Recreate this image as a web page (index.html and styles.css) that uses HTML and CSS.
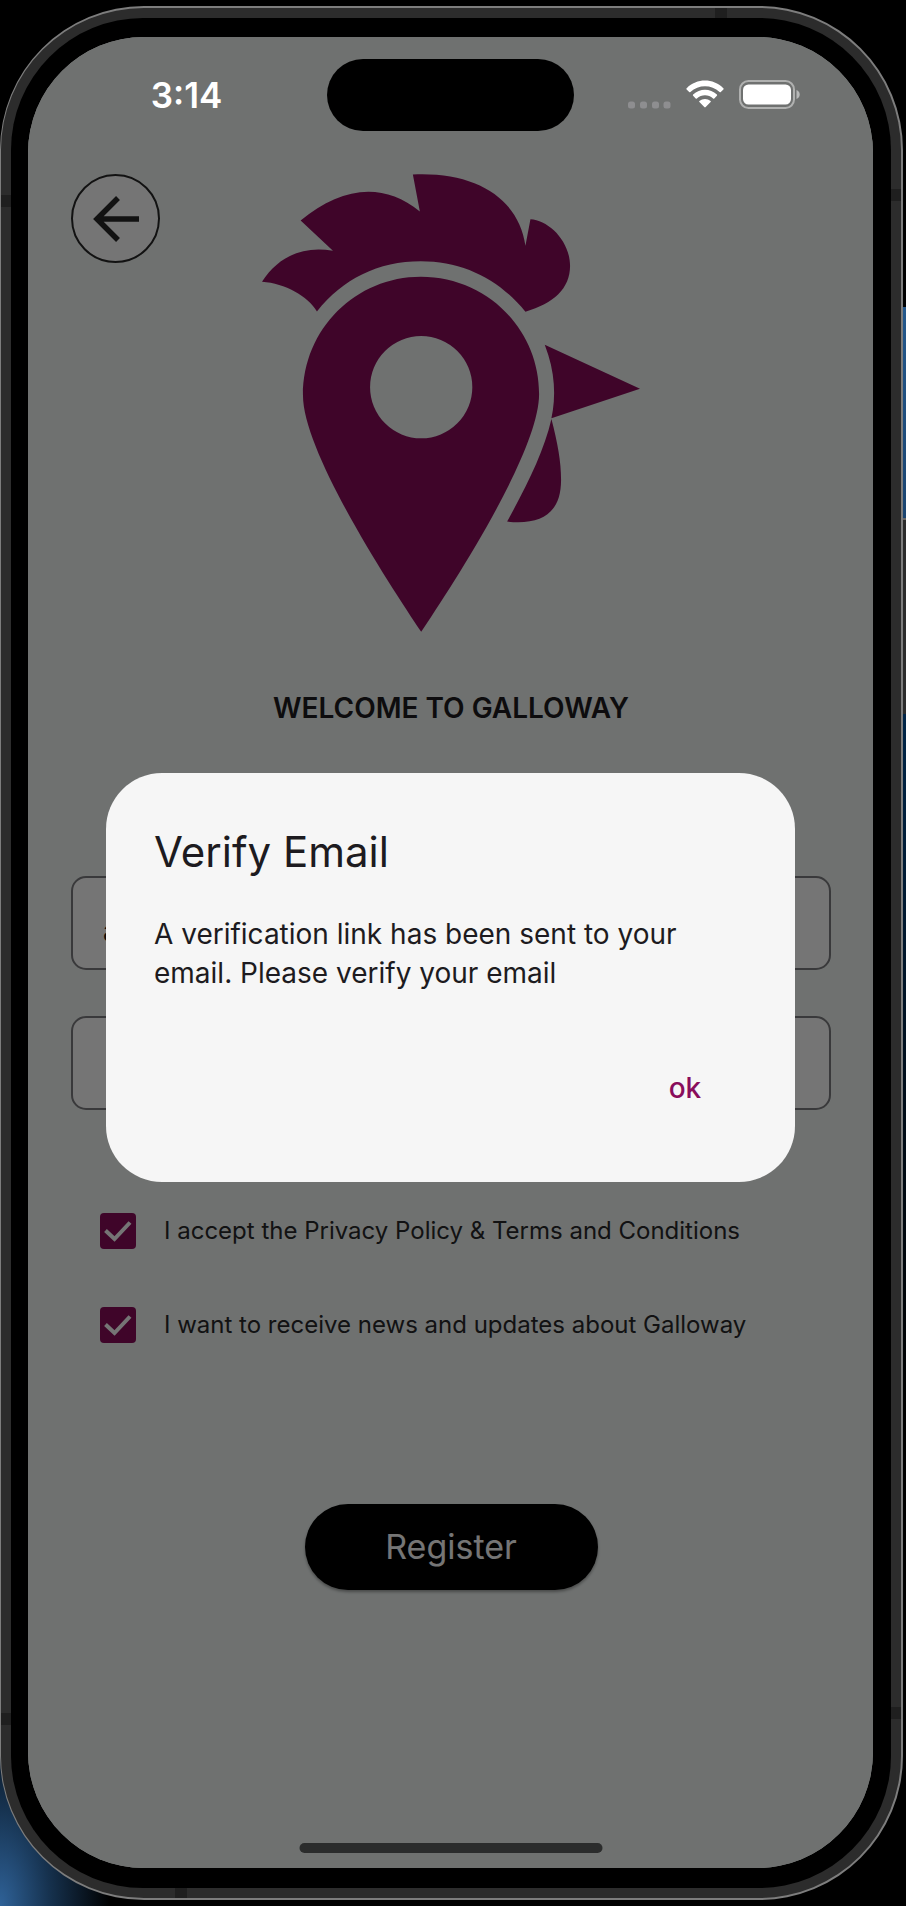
FILE: index.html
```html
<!DOCTYPE html>
<html lang="en">
<head>
<meta charset="utf-8">
<meta name="viewport" content="width=device-width, initial-scale=1">
<title>Galloway – Register</title>
<link rel="stylesheet" href="styles.css">
</head>
<body>
<div class="window-edge" aria-hidden="true"></div>
<div class="phone">
  <span class="antenna antenna-top"></span>
  <span class="antenna antenna-bottom"></span>
  <span class="antenna antenna-left"></span>
  <span class="antenna antenna-left-low"></span>
  <span class="antenna antenna-right"></span>
  <span class="antenna antenna-right-low"></span>
  <div class="bezel">
    <div class="screen">
      <header class="status-bar">
        <time class="clock">3:14</time>
        <div class="island"></div>
        <div class="indicators">
          <svg class="signal" width="43" height="8" viewBox="0 0 43 8" aria-hidden="true">
            <rect x="0" y="0.5" width="7" height="7" rx="2.5"/><rect x="12" y="0.5" width="7" height="7" rx="2.5"/><rect x="24" y="0.5" width="7" height="7" rx="2.5"/><rect x="35.5" y="0.5" width="7" height="7" rx="2.5"/>
          </svg>
          <svg width="38" height="28" viewBox="0 0 38 28" fill="#fff" aria-hidden="true">
            <path d="M0.7 8.2C10.8-2 27.2-2 37.3 8.2c.5.5.5.8.1 1.2l-2.600 2.600c-.4.4-.8.4-1.200 0C25.500 4.200 12.500 4.200 4.400 12c-.4.4-.8.4-1.200 0L.6 9.400c-.4-.4-.4-.7.1-1.200z"/>
            <path d="M7.100 14.600c6.700-6.400 17.100-6.400 23.800 0 .4.4.4.8 0 1.200l-2.600 2.600c-.4.4-.8.4-1.200 0-4.700-4.200-11.500-4.200-16.200 0-.4.4-.8.4-1.200 0l-2.600-2.600c-.4-.4-.4-.8 0-1.200z"/>
            <path d="M13.400 21c3.200-2.800 8-2.800 11.200 0 .4.4.4.7 0 1.100l-4.900 4.900c-.5.5-.9.5-1.400 0l-4.900-4.900c-.4-.4-.4-.7 0-1.100z"/>
          </svg>
          <svg width="61" height="29" viewBox="0 0 61 29" aria-hidden="true">
            <rect x="1" y="1" width="54" height="27" rx="8.500" fill="none" stroke="#fff" stroke-opacity=".45" stroke-width="2"/>
            <rect x="4" y="4.500" width="48" height="20" rx="5.500" fill="#fff"/>
            <path d="M57.500 10c2 .6 3.200 2.300 3.200 4.500s-1.200 3.900-3.200 4.500z" fill="#fff" fill-opacity=".5"/>
          </svg>
        </div>
      </header>

      <main class="page">
        <div class="hero">
          <button class="back" type="button" aria-label="Back">
            <svg width="46" height="46" viewBox="0 0 46 46" fill="none" stroke="#292929" stroke-width="5.500" aria-hidden="true">
              <path d="M25 2L4 23l21 21M4 23H46"/>
            </svg>
          </button>
          <svg class="logo" viewBox="64 42 1135 1374" role="img" aria-label="Galloway logo">
            <path d="M64 365C112 291 183 256 277 272L180 181C300 82 425 62 538 154L517 43C708 34 835 116 855 257L870 177C925 180 989 242 989 318C989 385 940 431 855 455C777 358 669 303 541 303C413 303 306 356 229 454C201 408 134 370 64 365Z"/>
            <path fill-rule="evenodd" d="M542 1416C456 1288 187 880 187 706C187 506 346 350 541 350C738 350 896 506 896 702C896 880 628 1288 542 1416ZM542 528A153.500 153.500 0 1 0 542 835A153.500 153.500 0 1 0 542 528Z"/>
            <path d="M913 554L1199 686L933 775C947 712 945 636 913 554Z"/>
            <path d="M933 777C952 850 962 905 962 960C962 1057 907 1096 800 1085C858 979 910 877 933 777Z"/>
          </svg>
        </div>
        <h1 class="welcome">WELCOME TO GALLOWAY</h1>
        <form class="form">
          <input class="field" type="text" aria-label="Email" value="a">
          <input class="field" type="password" aria-label="Password">
          <div class="consents">
            <label class="consent"><input type="checkbox" checked><span>I accept the Privacy Policy &amp; Terms and Conditions</span></label>
            <label class="consent"><input type="checkbox" checked><span>I want to receive news and updates about Galloway</span></label>
          </div>
          <button class="register" type="button">Register</button>
        </form>
      </main>

      <div class="backdrop">
        <section class="dialog" role="dialog" aria-modal="true" aria-labelledby="dialog-title">
          <h2 id="dialog-title">Verify Email</h2>
          <p>A verification link has been sent to your email. Please verify your email</p>
          <div class="actions"><button class="ok" type="button">ok</button></div>
        </section>
      </div>
      <div class="home-indicator"></div>
    </div>
  </div>
</div>
</body>
</html>
```
FILE: styles.css
```css
* {
  box-sizing: border-box;
}

body {
  position: relative;
  min-height: 100vh;
  margin: 0;
  padding: 6px 3px 6px 0;
  background: radial-gradient(ellipse 110px 220px at 0 100%, #2f6298, #16324f 45%, #000 100%) #000;
  font-family: Inter, "Liberation Sans", sans-serif;
}

.window-edge {
  position: absolute;
  top: 307px;
  right: 0;
  bottom: 0;
  width: 3px;
  background: linear-gradient(#24588c, #1a4470 211px, #666 211px, #666 213px, #2b2b2b 213px, #2b2b2b 407px, #002548 407px, #000c18 800px, #000 1100px);
}

.phone {
  position: relative;
  min-height: calc(100vh - 12px);
  padding: 10px;
  border: 2px solid #7d7d7d;
  border-left-width: 1px;
  border-radius: 144px;
  background: #2c2c2c;
  display: flex;
}

.bezel {
  flex: 1;
  display: flex;
  padding: 19px 18px 20px 17px;
  border-radius: 132px;
  background: #000;
}

.screen {
  position: relative;
  flex: 1;
  min-width: 0;
  overflow: hidden;
  border-radius: 116px;
  background: #f1f6f4;
}

.antenna {
  position: absolute;
  width: 10px;
  height: 12px;
  background: #1f1f1f;
}

.antenna-top, .antenna-bottom { width: 12px; height: 10px; }
.antenna-top { top: 0; right: 174px; }
.antenna-bottom { bottom: 0; left: 174px; }
.antenna-left { top: 187px; left: 0; }
.antenna-left-low { bottom: 173px; left: 0; }
.antenna-right { top: 181px; right: 0; }
.antenna-right-low { bottom: 179px; right: 0; }

.status-bar {
  position: relative;
  z-index: 2;
  display: grid;
  grid-template-columns: 1fr auto 1fr;
  align-items: center;
  height: 94px;
  padding-top: 22px;
  color: #fff;
}

.clock {
  justify-self: center;
  padding-left: 18px;
  font-size: 35px;
  font-weight: 600;
  line-height: 40px;
}

.island {
  width: 247px;
  height: 72px;
  border-radius: 36px;
  background: #000;
}

.indicators {
  display: flex;
  align-items: center;
  justify-content: center;
  gap: 15px;
  padding: 0 20px 2px 0;
}

.signal {
  align-self: flex-end;
  fill: #8e8e90;
}

.page {
  padding: 43px 42px 278px 43px;
}

.hero {
  display: grid;
  grid-template-columns: 1fr auto 1fr;
  align-items: start;
}

.back {
  display: grid;
  place-items: center;
  width: 89px;
  height: 89px;
  padding: 0;
  border: 2px solid #292929;
  border-radius: 50%;
  background: #fff;
}

.logo {
  width: 378px;
  height: 458px;
  fill: #890d5b;
}

.welcome {
  margin: 60px 0 0;
  color: #1d1b20;
  font-size: 28px;
  font-weight: 600;
  line-height: 32px;
  text-align: center;
}

.form {
  display: flex;
  flex-direction: column;
  gap: 46px;
  margin-top: 152px;
}

.field {
  width: 100%;
  height: 94px;
  padding: 16px 30px 0;
  border: 2px solid #7d7d80;
  border-radius: 15px;
  background: #fff;
  color: #1d1b20;
  font: 500 28px/32px Inter, "Liberation Sans", sans-serif;
}

.consents {
  display: grid;
  gap: 58px;
  margin-top: 57px;
  padding-left: 29px;
}

.consent {
  display: flex;
  align-items: center;
  gap: 28px;
  color: #29292b;
  font-size: 24px;
  line-height: 36px;
}

.consent input {
  appearance: none;
  flex: none;
  width: 36px;
  height: 36px;
  margin: 0;
  border-radius: 4px;
  background: #890d5b url("data:image/svg+xml,%3Csvg xmlns='http://www.w3.org/2000/svg' viewBox='0 0 36 36'%3E%3Cpath d='M5.500 17.500l9 8.500L30 9.500' fill='none' stroke='%23fff' stroke-width='4'/%3E%3C/svg%3E") center / 100% no-repeat;
}

.register {
  align-self: center;
  width: 293px;
  height: 86px;
  margin-top: 115px;
  border: 0;
  border-radius: 43px;
  background: #000;
  box-shadow: 0 2px 3px rgba(0, 0, 0, .35);
  color: #fff;
  font: 400 34px/40px Inter, "Liberation Sans", sans-serif;
}

.backdrop {
  position: absolute;
  inset: 0;
  z-index: 1;
  display: flex;
  align-items: center;
  justify-content: center;
  padding: 49px 78px 0;
  background: rgba(0, 0, 0, .54);
}

.dialog {
  width: 100%;
  padding: 48px 48px 52px;
  border-radius: 56px;
  background: #f6f6f6;
  color: #1d1b20;
}

.dialog h2 {
  margin: 0;
  font-size: 42px;
  font-weight: 400;
  line-height: 62px;
}

.dialog p {
  margin: 32px 0 0;
  font-size: 28px;
  line-height: 39px;
}

.actions {
  display: flex;
  justify-content: flex-end;
  margin-top: 53px;
}

.ok {
  width: 124px;
  height: 84px;
  border: 0;
  background: none;
  color: #890d5b;
  font: 500 28px/40px Inter, "Liberation Sans", sans-serif;
}

.home-indicator {
  position: absolute;
  bottom: 15px;
  left: 50%;
  z-index: 2;
  width: 303px;
  height: 10px;
  border-radius: 5px;
  background: #2b2c2c;
  transform: translateX(-50%);
}
```
